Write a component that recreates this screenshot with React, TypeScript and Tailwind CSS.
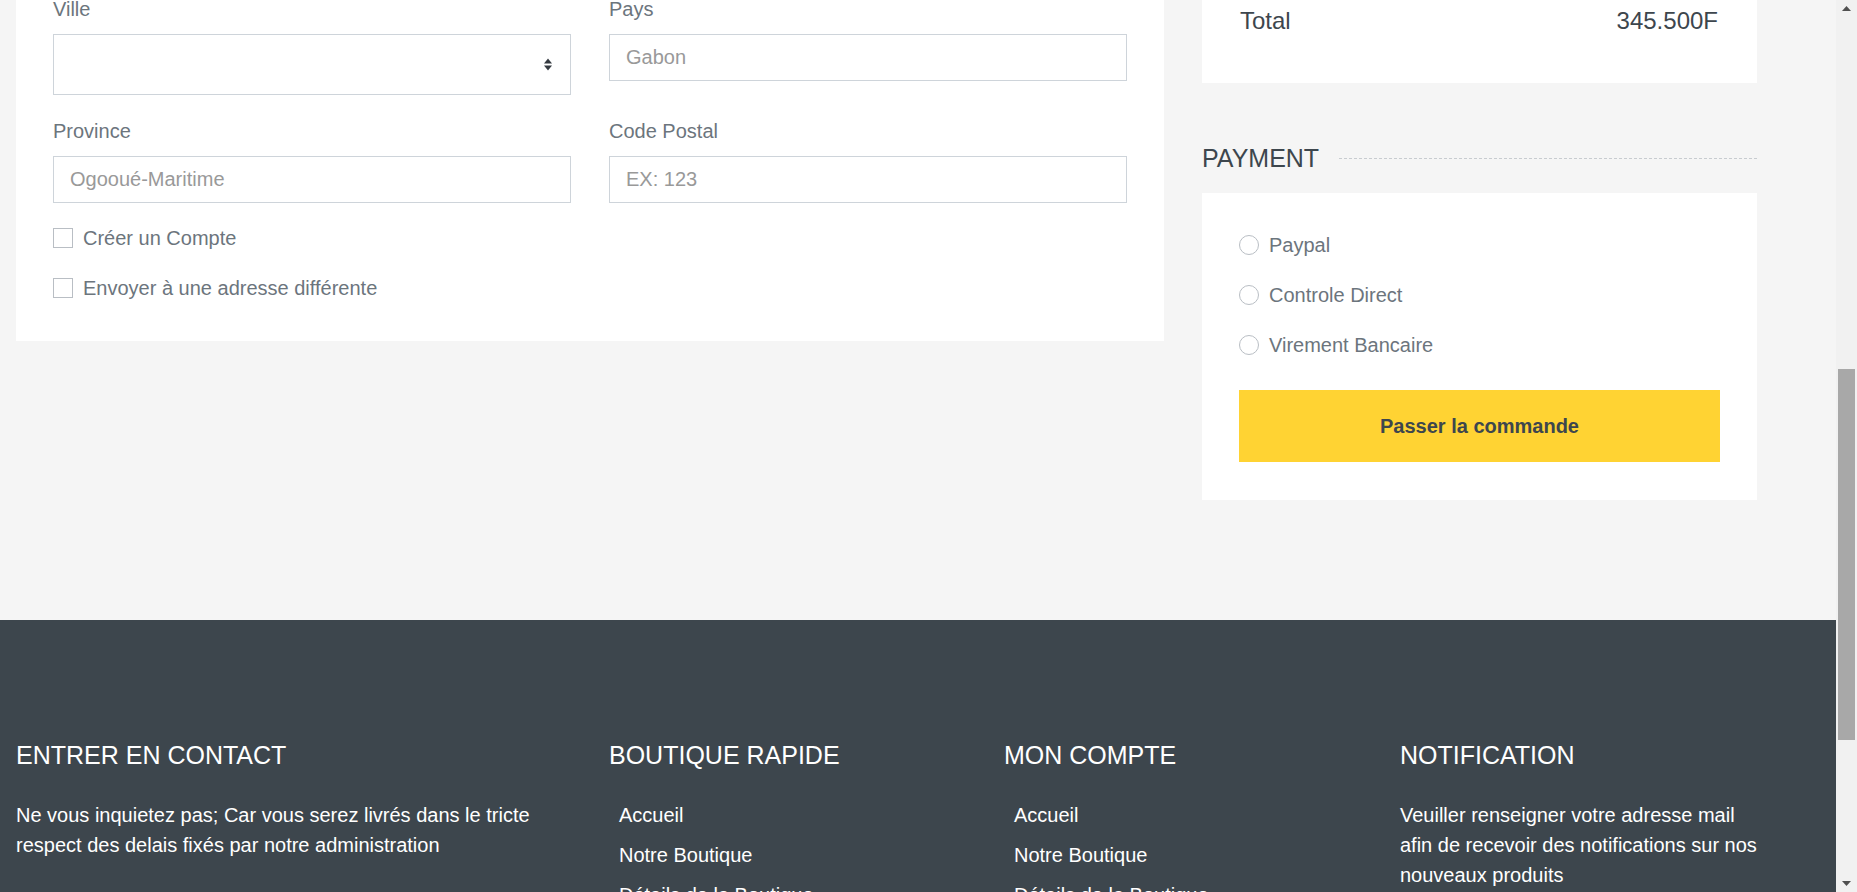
import React from 'react';

const labelCls = 'block text-[20px] leading-[30px] text-[#6c757d] mb-[10px]';
const inputCls =
  'block w-full h-[47px] border border-[#ced4da] bg-white px-[16px] text-[20px] text-[#495057] placeholder:text-[#999] outline-none';

function Field({ label, placeholder }: { label: string; placeholder: string }) {
  return (
    <div>
      <label className={labelCls}>{label}</label>
      <input className={inputCls} placeholder={placeholder} />
    </div>
  );
}

function Check({ label }: { label: string }) {
  return (
    <div className="flex h-[30px] items-center gap-[10px]">
      <span className="h-[20px] w-[20px] border border-[#b9bec4] bg-white" />
      <span className="text-[20px] text-[#6c757d]">{label}</span>
    </div>
  );
}

function Radio({ label }: { label: string }) {
  return (
    <div className="flex h-[30px] items-center gap-[10px]">
      <span className="h-[20px] w-[20px] rounded-full border border-[#b9bec4] bg-white" />
      <span className="text-[20px] text-[#6c757d]">{label}</span>
    </div>
  );
}

function SelectArrows() {
  return (
    <svg width="8" height="13" viewBox="0 0 8 13" fill="#343a40">
      <path d="M0 5.5 L4 0.5 L8 5.5 Z" />
      <path d="M0 7.5 L4 12.5 L8 7.5 Z" />
    </svg>
  );
}

function FooterCol({ title, links }: { title: string; links: string[] }) {
  return (
    <div>
      <h5 className="mb-[30px] text-[25px] leading-[30px] uppercase text-white">{title}</h5>
      <div className="flex flex-col">
        {links.map((l) => (
          <a key={l} className="mb-[10px] pl-[10px] text-[20px] leading-[30px] text-white">
            {l}
          </a>
        ))}
      </div>
    </div>
  );
}

const shopLinks = [
  'Accueil',
  'Notre Boutique',
  'Détails de la Boutique',
  'Panier',
  'Vérification',
  'Contactez-nous',
];

export default function App() {
  return (
    <div className="flex h-[892px] w-[1857px] overflow-hidden bg-[#f5f5f5] font-['Liberation_Sans',Arial,sans-serif]">
      <div className="flex w-[1836px] flex-col">
        <main className="flex h-[620px] shrink-0 items-start pl-[16px]">
          {/* billing form */}
          <div className="w-[1148px] bg-white px-[37px] pb-[38px]">
            <div className="-mt-[6px] grid grid-cols-2 gap-x-[38px] gap-y-[21px]">
              <div>
                <label className={labelCls}>Ville</label>
                <div className="flex h-[61px] items-center justify-end border border-[#ced4da] bg-white pr-[18px]">
                  <SelectArrows />
                </div>
              </div>
              <Field label="Pays" placeholder="Gabon" />
              <Field label="Province" placeholder="Ogooué-Maritime" />
              <Field label="Code Postal" placeholder="EX: 123" />
            </div>
            <div className="mt-[20px] flex flex-col gap-[20px]">
              <Check label="Créer un Compte" />
              <Check label="Envoyer à une adresse différente" />
            </div>
          </div>

          {/* order summary + payment */}
          <div className="ml-[38px] w-[555px]">
            <div className="bg-white px-[38px] pt-[6px] pb-[48px]">
              <div className="flex justify-between text-[24px] leading-[29px] text-[#3d464d]">
                <span>Total</span>
                <span className="pr-[1px]">345.500F</span>
              </div>
            </div>

            <div className="mt-[61px] mb-[20px] flex items-center">
              <h5 className="text-[25px] leading-[29px] uppercase text-[#3d464d]">Payment</h5>
              <div className="ml-[20px] flex-1 border-t border-dashed border-[#c8ccd0]" />
            </div>

            <div className="bg-white px-[37px] pt-[37px] pb-[38px]">
              <div className="flex flex-col gap-[20px]">
                <Radio label="Paypal" />
                <Radio label="Controle Direct" />
                <Radio label="Virement Bancaire" />
              </div>
              <button className="mt-[30px] flex h-[72px] w-full items-center justify-center bg-[#ffd333] text-[20px] font-bold text-[#3d464d]">
                Passer la commande
              </button>
            </div>
          </div>
        </main>

        <footer className="flex-1 bg-[#3d464d] pt-[120px] pl-[16px]">
          <div className="flex">
            <div className="w-[593px] pr-[38px]">
              <h5 className="mb-[30px] text-[25px] leading-[30px] uppercase text-white">Entrer en contact</h5>
              <p className="text-[20px] leading-[30px] text-white">
                Ne vous inquietez pas; Car vous serez livrés dans le tricte respect des delais fixés par notre administration
              </p>
            </div>
            <div className="w-[395px]">
              <FooterCol title="Boutique Rapide" links={shopLinks} />
            </div>
            <div className="w-[396px]">
              <FooterCol title="Mon Compte" links={shopLinks} />
            </div>
            <div className="w-[362px]">
              <h5 className="mb-[30px] text-[25px] leading-[30px] uppercase text-white">Notification</h5>
              <p className="text-[20px] leading-[30px] text-white">
                Veuiller renseigner votre adresse mail afin de recevoir des notifications sur nos nouveaux produits
              </p>
            </div>
          </div>
        </footer>
      </div>

      {/* scrollbar */}
      <div className="flex w-[21px] flex-col bg-[#f1f1f1]">
        <div className="flex h-[17px] items-center justify-center">
          <svg width="9" height="5" viewBox="0 0 9 5" fill="#505050">
            <path d="M0 5 L4.5 0 L9 5 Z" />
          </svg>
        </div>
        <div className="mx-[2px] mt-[352px] h-[371px] bg-[#a8a8a8]" />
        <div className="mt-auto flex h-[17px] items-center justify-center">
          <svg width="9" height="5" viewBox="0 0 9 5" fill="#505050">
            <path d="M0 0 L4.5 5 L9 0 Z" />
          </svg>
        </div>
      </div>
    </div>
  );
}
